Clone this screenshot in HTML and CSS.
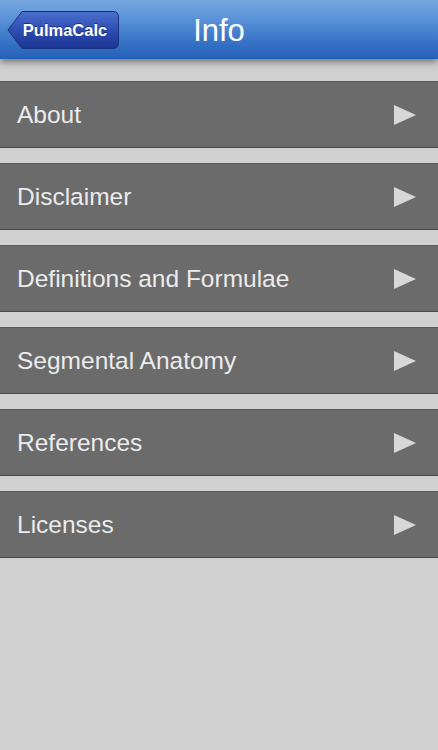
FILE: index.html
```html
<!DOCTYPE html>
<html>
<head>
<meta charset="utf-8">
<link rel="stylesheet" href="styles.css">
</head>
<body>
<div class="navbar">
  <div class="back">
    <svg class="back-shape" width="113" height="40" viewBox="0 0 113 40">
      <defs>
        <linearGradient id="bg" x1="0" y1="0" x2="0" y2="1">
          <stop offset="0" stop-color="#4a70cc"/>
          <stop offset="0.5" stop-color="#2d4db3"/>
          <stop offset="1" stop-color="#1c3592"/>
        </linearGradient>
      </defs>
      <path d="M1 20 L15 1.5 L106 1.5 Q111.5 1.5 111.5 7 L111.5 33 Q111.5 38.5 106 38.5 L15 38.5 Z" fill="url(#bg)" stroke="#1a3180" stroke-width="1"/>
    </svg>
    <span class="back-label">PulmaCalc</span>
  </div>
  <div class="title">Info</div>
</div>
<div class="list">
  <div class="row"><span>About</span><span class="arrow"></span></div>
  <div class="row"><span>Disclaimer</span><span class="arrow"></span></div>
  <div class="row"><span>Definitions and Formulae</span><span class="arrow"></span></div>
  <div class="row"><span>Segmental Anatomy</span><span class="arrow"></span></div>
  <div class="row"><span>References</span><span class="arrow"></span></div>
  <div class="row"><span>Licenses</span><span class="arrow"></span></div>
</div>
</body>
</html>
```
FILE: styles.css
```css
html, body {
  margin: 0;
  padding: 0;
}
body {
  width: 438px;
  height: 750px;
  background: #d0d0d0;
  font-family: "Liberation Sans", Arial, sans-serif;
  overflow: hidden;
}
.navbar {
  position: relative;
  height: 59px;
  background: linear-gradient(to bottom, #78a8e0 0%, #5690d6 35%, #306cc2 80%, #2461b8 100%);
  box-shadow: 0 3px 7px rgba(0,0,0,0.45);
  z-index: 2;
}
.back {
  position: absolute;
  left: 7px;
  top: 10px;
  width: 113px;
  height: 40px;
}
.back-shape {
  position: absolute;
  left: 0;
  top: 0;
}
.back-label {
  position: absolute;
  left: 10px;
  top: 0;
  width: 96px;
  height: 40px;
  line-height: 40px;
  text-align: center;
  color: #fff;
  font-weight: bold;
  font-size: 16.5px;
  text-shadow: 0 -1px 0 rgba(0,0,0,0.4);
}
.title {
  text-align: center;
  color: #fff;
  font-size: 31px;
  line-height: 62px;
}
.list {
  display: flex;
  flex-direction: column;
  gap: 15px;
  padding-top: 22px;
}
.row {
  height: 65px;
  background: #6b6b6b;
  border-top: 1px solid #5a5a5a;
  border-bottom: 1px solid #4a4a4a;
  display: flex;
  align-items: center;
  justify-content: space-between;
  padding: 0 22px 0 17px;
  color: #ececec;
  font-size: 24.5px;
}
.arrow {
  width: 0;
  height: 0;
  border-top: 10px solid transparent;
  border-bottom: 10px solid transparent;
  border-left: 22px solid #d8d8d8;
}
```
